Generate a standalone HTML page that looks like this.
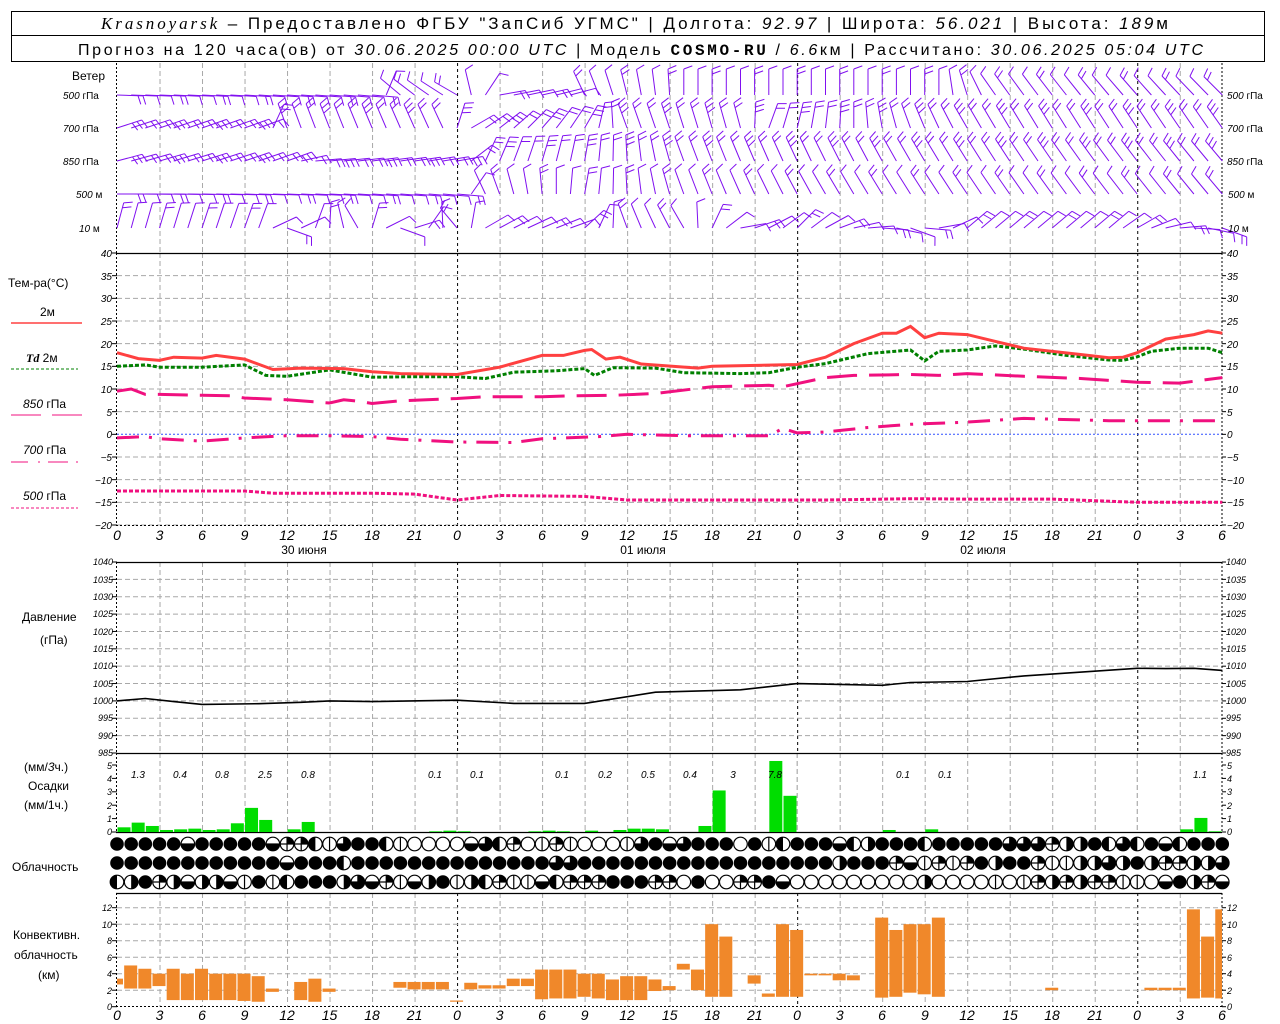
<!DOCTYPE html>
<html><head><meta charset="utf-8"><style>
html,body{margin:0;padding:0;background:#fff;width:1280px;height:1024px;overflow:hidden}
svg{display:block}
.t{font-family:"Liberation Sans",sans-serif;font-size:12px;fill:#000}
.ax{font-family:"Liberation Sans",sans-serif;font-style:italic;font-size:14px;fill:#000}
.sm{font-family:"Liberation Sans",sans-serif;font-style:italic;font-size:10px;fill:#000}
.xs{font-family:"Liberation Sans",sans-serif;font-style:italic;font-size:9px;fill:#000}
</style></head><body>
<svg id="s" width="1280" height="1024" xmlns="http://www.w3.org/2000/svg">
<rect width="1280" height="1024" fill="#fff"/>
<rect x="11.5" y="11.5" width="1253" height="50" fill="none" stroke="#000"/>
<line x1="11" y1="35.5" x2="1265" y2="35.5" stroke="#000"/>
<text x="101" y="29" textLength="1067" lengthAdjust="spacing" style="font-family:'Liberation Sans',sans-serif;font-size:17px"><tspan style="font-family:'Liberation Serif',serif;font-style:italic">Krasnoyarsk</tspan> – Предоставлено ФГБУ "ЗапСиб УГМС" | Долгота: <tspan font-style="italic">92.97</tspan> | Широта: <tspan font-style="italic">56.021</tspan> | Высота: <tspan font-style="italic">189</tspan>м</text>
<text x="78" y="55" textLength="1125" lengthAdjust="spacing" style="font-family:'Liberation Sans',sans-serif;font-size:16px">Прогноз на 120 часа(ов) от <tspan font-style="italic">30.06.2025 00:00 UTC</tspan> | Модель <tspan style="font-family:'Liberation Mono',monospace;font-weight:bold">COSMO-RU</tspan> / <tspan font-style="italic">6.6</tspan>км | Рассчитано: <tspan font-style="italic">30.06.2025 05:04 UTC</tspan></text>

<g id="grid"></g>
<g id="data"></g>

<text class="t" x="72" y="80">Ветер</text>
<g class="sm"><text x="63" y="99">500 <tspan font-style="normal">гПа</tspan></text><text x="63" y="132">700 <tspan font-style="normal">гПа</tspan></text><text x="63" y="165">850 <tspan font-style="normal">гПа</tspan></text><text x="76" y="198">500 <tspan font-style="normal">м</tspan></text><text x="79" y="232">10 <tspan font-style="normal">  м</tspan></text></g>
<g class="sm"><text x="1227" y="99">500 <tspan font-style="normal">гПа</tspan></text><text x="1227" y="132">700 <tspan font-style="normal">гПа</tspan></text><text x="1227" y="165">850 <tspan font-style="normal">гПа</tspan></text><text x="1228" y="198">500 <tspan font-style="normal">м</tspan></text><text x="1228" y="232">10 <tspan font-style="normal">  м</tspan></text></g>
<text class="t" x="8" y="287">Тем-ра(°С)</text>
<text class="t" x="40" y="316" font-size="11">2м</text>
<line x1="11" y1="323" x2="82" y2="323" stroke="#ff4040" stroke-width="1.5"/>
<text class="t" x="26" y="362" font-size="11"><tspan font-style="italic" font-weight="bold" style="font-family:'Liberation Serif',serif">Td</tspan>  2м</text>
<line x1="11" y1="369" x2="78" y2="369" stroke="#008000" stroke-dasharray="3,2"/>
<text class="t" x="23" y="408" font-size="11"><tspan font-style="italic">850</tspan> гПа</text>
<line x1="11" y1="415" x2="41" y2="415" stroke="#f0107f"/><line x1="52" y1="415" x2="82" y2="415" stroke="#f0107f"/>
<text class="t" x="23" y="454" font-size="11"><tspan font-style="italic">700</tspan> гПа</text>
<line x1="11" y1="462" x2="28" y2="462" stroke="#f0107f"/><line x1="38" y1="462" x2="40" y2="462" stroke="#f0107f"/><line x1="48" y1="462" x2="68" y2="462" stroke="#f0107f"/><line x1="76" y1="462" x2="78" y2="462" stroke="#f0107f"/>
<text class="t" x="23" y="500" font-size="11"><tspan font-style="italic">500</tspan> гПа</text>
<line x1="11" y1="508" x2="78" y2="508" stroke="#f0107f" stroke-dasharray="3,2"/>
<text class="t" x="22" y="621">Давление</text>
<text class="t" x="40" y="644">(гПа)</text>
<text class="t" x="24" y="771">(мм/<tspan font-style="italic">3</tspan>ч.)</text>
<text class="t" x="28" y="790">Осадки</text>
<text class="t" x="24" y="809">(мм/1ч.)</text>
<text class="t" x="12" y="871">Облачность</text>
<text class="t" x="13" y="939">Конвективн.</text>
<text class="t" x="14" y="959">облачность</text>
<text class="t" x="38" y="979">(км)</text>

<g class="ax" text-anchor="middle">
<text x="117" y="540">0</text><text x="159.5" y="540">3</text><text x="202" y="540">6</text><text x="244.5" y="540">9</text><text x="287" y="540">12</text><text x="329.5" y="540">15</text><text x="372" y="540">18</text><text x="414.6" y="540">21</text><text x="457" y="540">0</text><text x="499.6" y="540">3</text><text x="542" y="540">6</text><text x="584.7" y="540">9</text><text x="627" y="540">12</text><text x="669.7" y="540">15</text><text x="712" y="540">18</text><text x="754.8" y="540">21</text><text x="797" y="540">0</text><text x="839.8" y="540">3</text><text x="882" y="540">6</text><text x="924.9" y="540">9</text><text x="967" y="540">12</text><text x="1010" y="540">15</text><text x="1052" y="540">18</text><text x="1095" y="540">21</text><text x="1137" y="540">0</text><text x="1180" y="540">3</text><text x="1222" y="540">6</text>
</g>
<g class="ax" text-anchor="middle">
<text x="117" y="1020">0</text><text x="159.5" y="1020">3</text><text x="202" y="1020">6</text><text x="244.5" y="1020">9</text><text x="287" y="1020">12</text><text x="329.5" y="1020">15</text><text x="372" y="1020">18</text><text x="414.6" y="1020">21</text><text x="457" y="1020">0</text><text x="499.6" y="1020">3</text><text x="542" y="1020">6</text><text x="584.7" y="1020">9</text><text x="627" y="1020">12</text><text x="669.7" y="1020">15</text><text x="712" y="1020">18</text><text x="754.8" y="1020">21</text><text x="797" y="1020">0</text><text x="839.8" y="1020">3</text><text x="882" y="1020">6</text><text x="924.9" y="1020">9</text><text x="967" y="1020">12</text><text x="1010" y="1020">15</text><text x="1052" y="1020">18</text><text x="1095" y="1020">21</text><text x="1137" y="1020">0</text><text x="1180" y="1020">3</text><text x="1222" y="1020">6</text>
</g>
<g class="t" text-anchor="middle" font-size="13"><text x="304" y="554">30 июня</text><text x="643" y="554">01 июля</text><text x="983" y="554">02 июля</text></g>

<g class="sm" text-anchor="end">
<text x="112" y="257">40</text><text x="112" y="280">35</text><text x="112" y="302">30</text><text x="112" y="325">25</text><text x="112" y="348">20</text><text x="112" y="370">15</text><text x="112" y="393">10</text><text x="112" y="416">5</text><text x="112" y="438">0</text><text x="112" y="461">−5</text><text x="112" y="484">−10</text><text x="112" y="506">−15</text><text x="112" y="529">−20</text>
</g>
<g class="sm">
<text x="1227" y="257">40</text><text x="1227" y="280">35</text><text x="1227" y="302">30</text><text x="1227" y="325">25</text><text x="1227" y="348">20</text><text x="1227" y="370">15</text><text x="1227" y="393">10</text><text x="1227" y="416">5</text><text x="1227" y="438">0</text><text x="1227" y="461">−5</text><text x="1227" y="484">−10</text><text x="1227" y="506">−15</text><text x="1227" y="529">−20</text>
</g>
<g class="xs" text-anchor="end">
<text x="113" y="565">1040</text><text x="113" y="583">1035</text><text x="113" y="600">1030</text><text x="113" y="617">1025</text><text x="113" y="635">1020</text><text x="113" y="652">1015</text><text x="113" y="669">1010</text><text x="113" y="687">1005</text><text x="113" y="704">1000</text><text x="113" y="721">995</text><text x="113" y="739">990</text><text x="113" y="756">985</text>
</g>
<g class="xs">
<text x="1226" y="565">1040</text><text x="1226" y="583">1035</text><text x="1226" y="600">1030</text><text x="1226" y="617">1025</text><text x="1226" y="635">1020</text><text x="1226" y="652">1015</text><text x="1226" y="669">1010</text><text x="1226" y="687">1005</text><text x="1226" y="704">1000</text><text x="1226" y="721">995</text><text x="1226" y="739">990</text><text x="1226" y="756">985</text>
</g>
<g class="xs" text-anchor="end"><text x="112" y="769">5</text><text x="112" y="782">4</text><text x="112" y="795">3</text><text x="112" y="809">2</text><text x="112" y="822">1</text><text x="112" y="835">0</text></g>
<g class="xs"><text x="1227" y="769">5</text><text x="1227" y="782">4</text><text x="1227" y="795">3</text><text x="1227" y="809">2</text><text x="1227" y="822">1</text><text x="1227" y="835">0</text></g>
<g class="sm" font-size="12" text-anchor="middle">
<text x="138" y="778">1.3</text><text x="180" y="778">0.4</text><text x="222" y="778">0.8</text><text x="265" y="778">2.5</text><text x="308" y="778">0.8</text><text x="435" y="778">0.1</text><text x="477" y="778">0.1</text><text x="562" y="778">0.1</text><text x="605" y="778">0.2</text><text x="648" y="778">0.5</text><text x="690" y="778">0.4</text><text x="733" y="778">3</text><text x="775" y="778">7.8</text><text x="903" y="778">0.1</text><text x="945" y="778">0.1</text><text x="1200" y="778">1.1</text>
</g>
<g class="xs" text-anchor="end"><text x="112" y="911">12</text><text x="112" y="928">10</text><text x="112" y="944">8</text><text x="112" y="961">6</text><text x="112" y="977">4</text><text x="112" y="994">2</text><text x="112" y="1010">0</text></g>
<g class="xs"><text x="1227" y="911">12</text><text x="1227" y="928">10</text><text x="1227" y="944">8</text><text x="1227" y="961">6</text><text x="1227" y="977">4</text><text x="1227" y="994">2</text><text x="1227" y="1010">0</text></g>
</svg>
<script>
(function(){
var NS="http://www.w3.org/2000/svg";
var G=document.getElementById('grid'),D=document.getElementById('data');
function X(h){return 117+14.17*h;}
function el(p,t,a){var e=document.createElementNS(NS,t);for(var k in a)e.setAttribute(k,a[k]);p.appendChild(e);return e;}
function ln(p,x1,y1,x2,y2,s,w,da){var a={x1:x1,y1:y1,x2:x2,y2:y2,stroke:s,'stroke-width':w||1};if(da)a['stroke-dasharray']=da;return el(p,'line',a);}
var panels=[[63,253],[253,525],[562,753],[753,832],[893,1007]];
for(var h=3;h<78;h+=3){var day=(h%24==0);panels.forEach(function(p){
  if(p[0]==753&&day){ln(G,X(h),p[0],X(h),p[1],'#999',1,'5,3');return;}
  ln(G,X(h)+.5,p[0],X(h)+.5,p[1],day?'#000':'#a8a8a8',1,day?'3,3':'5,3');});}
for(var k=1;k<13;k++){var y=253+k*22.667;if(k==8)continue;ln(G,117,y,1222,y,'#a8a8a8',1,'5,3');}
ln(G,117,434.3,1222,434.3,'#3050ff',1,'2,2');
for(var k=1;k<11;k++){var y=562+k*17.36;ln(G,117,y,1222,y,'#a8a8a8',1,'5,3');}
for(var k=1;k<7;k++){var y=1006.7-k*16.5;ln(G,117,y,1222,y,'#a8a8a8',1,'5,3');}
[253,562,753,832,893].forEach(function(y){ln(G,116,y+.5,1222,y+.5,'#000',1.3);});
ln(G,116,1006.5,1222,1006.5,'#000',1,'2,2');
ln(G,116,525.5,1222,525.5,'#000',1,'2,2');
panels.forEach(function(p){ln(G,116.5,p[0],116.5,p[1],'#000',1,'2,2');ln(G,1222,p[0],1222,p[1],'#000',1,'2,2');});
function ticks(y0,y1,n){for(var i=0;i<=n;i++){var y=y0+(y1-y0)*i/n;ln(G,112,y,117,y,'#000');ln(G,1222,y,1226,y,'#000');}}
ticks(253,525,12);ticks(562,753,11);ticks(765,832,5);ticks(907.7,1006.7,6);
function curve(pts,f,c,w,da){var d='';pts.forEach(function(p,i){d+=(i?'L':'M')+X(p[0]).toFixed(1)+','+f(p[1]).toFixed(1);});
 var a={d:d,fill:'none',stroke:c,'stroke-width':w};if(da)a['stroke-dasharray']=da;el(D,'path',a);}
var T=function(v){return 434.3-4.533*v;};
curve([[0,9.5],[1,10],[2,8.8],[3,8.8],[6,8.6],[8,8.5],[9,8],[12,7.6],[15,6.9],[16,7.6],[17,7.3],[18,6.8],[20,7.4],[24,7.9],[26,8.3],[30,8.3],[32,8.5],[35,8.6],[38,9],[42,10.5],[46,10.8],[47,10.5],[50,12.5],[52,13],[56,13.2],[58,13],[60,13.4],[64,12.8],[68,12.3],[72,11.5],[75,11.3],[78,12.5]],T,'#f0107f',3,'30,12');
curve([[0,-0.8],[2,-0.5],[3,-1],[6,-1.5],[9,-0.8],[12,-0.3],[15,-0.3],[18,-0.5],[20,-1.1],[24,-1.7],[28,-1.8],[30,-1],[34,-0.5],[36,0],[40,-0.3],[46,-0.3],[47,1.3],[48,0.3],[50,0.5],[53,1.5],[56,2.2],[60,2.7],[64,3.5],[70,3],[72,3],[78,3]],T,'#f0107f',3,'22,10,3,10');
curve([[0,-12.5],[9,-12.5],[11,-13],[18,-13],[21,-13.2],[24,-14.5],[27,-13.5],[33,-13.7],[36,-14.5],[45,-14.5],[50,-14.5],[56,-14.2],[60,-14.3],[66,-14.3],[72,-15],[78,-15]],T,'#f0107f',3,'4,2');
curve([[0,15],[2,15.3],[3,14.8],[6,14.8],[9,15.3],[10.5,13],[12,12.8],[15,14.2],[18,12.6],[21,12.7],[24,12.7],[26,12.3],[28,13.7],[31,14],[33,14.5],[33.7,13],[35,14.7],[38,14.6],[40,13.6],[44,13.4],[46,13.6],[48,14.8],[50,15.6],[53,17.8],[56,18.6],[57,16.2],[58,18.3],[60,18.6],[62,19.5],[64,18.8],[67,17.4],[70,16.4],[71,16.3],[72,17.1],[73,18.3],[75,19],[77,19],[78,18]],T,'#008000',3,'4,2');
curve([[0,18],[1.5,16.7],[3,16.3],[4,17],[6,16.8],[7,17.4],[9,16.6],[11,14.3],[13,14.6],[16,14.5],[18,13.8],[20,13.4],[24,13.2],[27,14.8],[30,17.4],[31.5,17.4],[33,18.5],[33.5,18.7],[34.5,16.6],[35.5,17],[37,15.5],[41,14.6],[42,15],[48,15.4],[50,17],[52,20],[54,22.3],[55,22.3],[56,23.8],[57,21.3],[58,22.3],[60,22],[62,20.5],[64,19],[68,17.6],[70,16.9],[71,17],[72,18],[74,21],[76,22],[77,22.8],[78,22.3]],T,'#ff4040',3);
curve([[0,1000],[2,1000.7],[4,999.8],[6,999],[10,999.2],[13,999.6],[15,1000],[18,999.8],[24,1000.2],[28,999.3],[33,999.3],[38,1002.5],[44,1003.2],[48,1005],[54,1004.5],[56,1005.3],[60,1005.6],[64,1007.2],[72,1009.4],[74,1009.3],[76,1009.4],[78,1008.8]],function(p){return 562+(1040-p)*3.473;},'#000',1.6);
var pr={0:.35,1:.7,2:.45,3:.15,4:.2,5:.25,6:.15,7:.2,8:.65,9:1.8,10:.9,12:.2,13:.75,22:.05,23:.1,24:.05,29:.05,30:.1,31:.05,33:.1,35:.15,36:.25,37:.25,38:.2,41:.45,42:3.1,46:5.3,47:2.7,54:.15,57:.2,75:.2,76:1.05,77:.05};
for(var i in pr){var hh=pr[i]*13.4;el(D,'rect',{x:X(+i)+.5,y:832-hh,width:13,height:hh,fill:'#00dd00'});}
var cv={0:[2.7,3.4],1:[2.2,5],2:[2.2,4.6],3:[2.5,4],4:[.8,4.6],5:[.8,4],6:[.8,4.6],7:[.8,4],8:[.8,4],9:[.7,4],10:[.6,3.7],11:[1.8,2.2],13:[.8,3],14:[.6,3.4],15:[1.8,2.2],20:[2.3,3],21:[2.1,3],22:[2.1,3],23:[2.1,3],24:[.6,.75],25:[2.1,2.9],26:[2.2,2.6],27:[2.2,2.6],28:[2.5,3.4],29:[2.5,3.4],30:[.9,4.5],31:[1,4.5],32:[1,4.5],33:[1.2,4],34:[1,4],35:[.8,3.3],36:[.8,3.7],37:[.8,3.7],38:[1.9,3.3],39:[2,2.5],40:[4.5,5.2],41:[2,4.5],42:[1.2,10],43:[1.2,8.5],45:[2.8,3.8],46:[1.2,1.6],47:[1.2,10],48:[1.2,9.3],49:[3.8,4],50:[3.8,4],51:[3.2,4],52:[3.2,3.8],54:[1.1,10.8],55:[1.2,9.3],56:[1.7,10],57:[1.5,10],58:[1.2,10.8],66:[2,2.3],73:[2,2.3],74:[2,2.3],75:[2,2.3],76:[1,11.8],77:[1.1,8.5],78:[1,11.8]};
for(var i in cv){var a=cv[i],x0=X(+i)-7,x1=x0+13;if(x0<117)x0=117;if(x1>1222)x1=1222;
 el(D,'rect',{x:x0,y:1006.7-a[1]*8.25,width:x1-x0,height:(a[1]-a[0])*8.25,fill:'#f0882a'});}
var rows=[[844,"FFFFFHFFFFFHQQLVTFFLV"+"EEEEHTLQEVQVEEEVTFHTFFFEFVLFFFH"+"LRFFFLFFFFFTTTQRRFLTLFHLFFF"],
[863,"FFFFFFFFFFFFHFFFLFFFF"+"FFFFFFFFFFTTFFFFFFFFFFFFFFFFFFR"+"FFFQHVQVQFRFFQVVRRTRFRQQRRT"],
[882,"LRFQRHRRHVFVLFFFRTHQV"+"HRFVRLQVVHLQQQFFFQQEFEEQQFHEEEE"+"EEEEEREEEEVEVQRQRQQVVEHFRQH"]];
rows.forEach(function(r){var y=r[0],s=r[1];for(var i=0;i<s.length&&i<79;i++){var c=s[i],cx=X(i),rr=6.8,g=el(D,'g',{});
 if(c=='F'){el(g,'circle',{cx:cx,cy:y,r:rr,fill:'#000'});continue;}
 el(g,'circle',{cx:cx,cy:y,r:rr,fill:'#fff',stroke:'#000','stroke-width':1.2});
 var d='';
 if(c=='L')d='M'+cx+','+(y-rr)+'A'+rr+','+rr+' 0 0 0 '+cx+','+(y+rr)+'Z';
 if(c=='R')d='M'+cx+','+(y-rr)+'A'+rr+','+rr+' 0 0 1 '+cx+','+(y+rr)+'Z';
 if(c=='H'){d='M'+(cx+rr)+','+y+'A'+rr+','+rr+' 0 0 1 '+(cx-rr)+','+y+'Z';}
 if(c=='Q')d='M'+cx+','+y+'L'+cx+','+(y-rr)+'A'+rr+','+rr+' 0 0 1 '+(cx+rr)+','+y+'Z';
 if(c=='T')d='M'+cx+','+y+'L'+cx+','+(y-rr)+'A'+rr+','+rr+' 0 1 1 '+(cx-rr)+','+y+'Z';
 if(d)el(g,'path',{d:d,fill:'#000'});
 if(c=='V'||c=='Q'||c=='T')ln(g,cx,y-rr,cx,y+rr,'#000',1.2);
 if(c=='H'||c=='Q'||c=='T')ln(g,cx-rr,y,cx+rr,y,'#000',1.2);
}});
var W=[[95,1,[[0,92],[18,95],[20,-50],[24,-60],[27,80],[32,75],[33,-25],[40,0],[58,0],[62,-35],[78,-45]]],
[128,2,[[0,72],[10,70],[12,-20],[23,-25],[25,60],[33,30],[36,-20],[44,-15],[46,20],[52,0],[56,-20],[60,-30],[78,-35]]],
[161,2,[[0,75],[12,70],[14,85],[24,80],[26,25],[33,10],[40,-20],[48,-25],[56,-30],[78,-40]]],
[194,1,[[0,90],[24,95],[26,-25],[33,10],[40,-20],[50,-30],[78,-40]]],
[228,1,[[0,15],[10,20],[12,110],[14,20],[17,-30],[20,110],[24,-40],[26,60],[32,70],[36,-20],[40,-30],[44,80],[48,45],[56,110],[60,50],[70,50],[72,60],[78,110]]]];
var P=el(D,'g',{stroke:'#8010f0','stroke-width':1,fill:'none'});
function ang(k,h){for(var j=1;j<k.length;j++){if(h<=k[j][0]){var a=k[j-1],b=k[j],t=(h-a[0])/(b[0]-a[0]);return a[1]+(b[1]-a[1])*t;}}return k[k.length-1][1];}
W.forEach(function(w){for(var i=0;i<=78;i++){var th=ang(w[2],i)*Math.PI/180,cx=X(i),cy=w[0];
 var dx=Math.sin(th),dy=-Math.cos(th),L=26,tx=cx+dx*L,ty=cy+dy*L;
 if(ty<66){ty=66;}
 var d='M'+cx.toFixed(1)+','+cy+'L'+tx.toFixed(1)+','+ty.toFixed(1);
 var bx=-dy,by=dx;
 var n=w[1]+((i*7)%3==0?1:0);if(n<1)n=1;
 for(var b=0;b<n;b++){var px=tx-dx*b*5,py=ty-dy*b*5;var ex=px+(bx*0.94+dx*0.34)*9,ey=py+(by*0.94+dy*0.34)*9;
  d+='M'+px.toFixed(1)+','+py.toFixed(1)+'L'+ex.toFixed(1)+','+ey.toFixed(1);}
 el(P,'path',{d:d});}});
})();
</script>
</body></html>
